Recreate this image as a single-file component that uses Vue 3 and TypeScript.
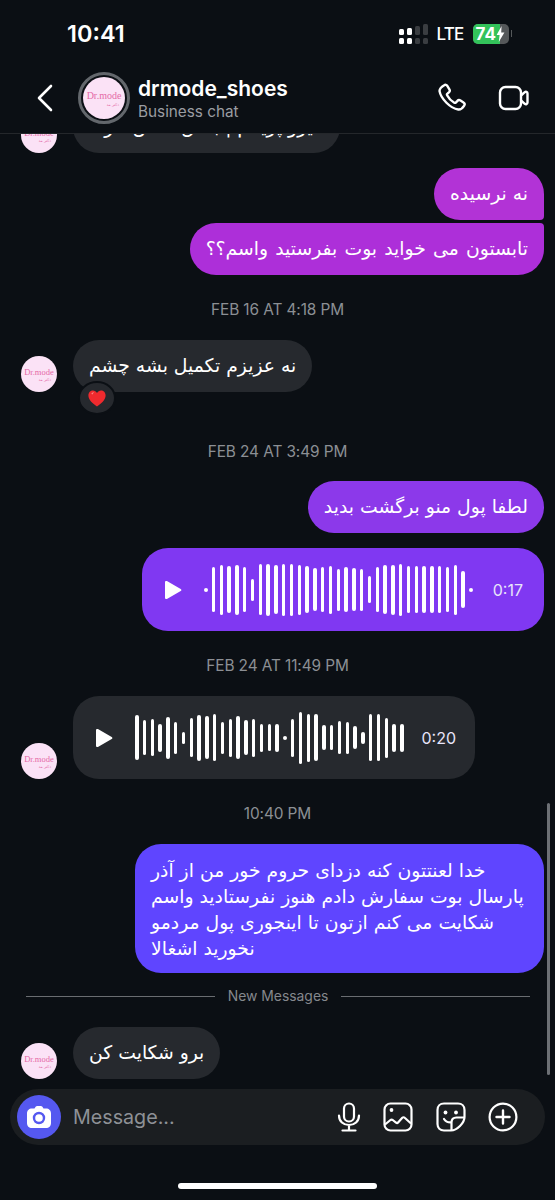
<script setup lang="ts">
const outBars = [45, 50, 47, 50, 45, 22, 51, 52, 49, 52, 52, 50, 47, 43, 45, 48, 42, 45, 43, 42, 27, 45, 49, 50, 52, 47, 47, 47, 47, 47, 45, 50, 37]
const inBars = [45, 35, 37, 28, 42, 32, 12, 39, 46, 43, 47, 32, 38, 43, 35, 38, 28, 27, 28, 4, 38, 52, 48, 47, 25, 25, 33, 32, 23, 12, 47, 47, 40, 28, 28]
</script>

<template>
  <div class="screen">
    <header class="top">
      <div class="status">
        <span class="clock">10:41</span>
        <div class="status-right">
          <svg class="signal" width="29" height="20" viewBox="0 0 29 20">
            <rect x="0" y="5" width="5" height="6" rx="1.500" fill="#fff" />
            <rect x="0" y="14" width="5" height="6" rx="1.500" fill="#fff" />
            <rect x="8" y="4" width="5" height="7" rx="1.500" fill="#fff" />
            <rect x="8" y="14" width="5" height="6" rx="1.500" fill="#fff" />
            <rect x="16" y="2" width="5" height="9" rx="1.500" fill="#3a3d41" />
            <rect x="16" y="14" width="5" height="6" rx="1.500" fill="#3a3d41" />
            <rect x="24" y="0" width="5" height="11" rx="1.500" fill="#3a3d41" />
            <rect x="24" y="14" width="5" height="6" rx="1.500" fill="#3a3d41" />
          </svg>
          <span class="lte">LTE</span>
          <div class="battery">
            <div class="battery-fill"></div>
            <span class="battery-num">74</span>
            <svg class="bolt" width="9" height="16" viewBox="0 0 9 16">
              <path d="M5.600 0 0.600 9h3L2.800 16l5.600-9.600H5.200z" fill="#fff" />
            </svg>
          </div>
          <span class="battery-tip"></span>
        </div>
      </div>
      <nav class="nav">
        <svg class="back" width="18" height="28" viewBox="0 0 18 28">
          <path d="M15 2 3 14l12 12" fill="none" stroke="#fff" stroke-width="2.600" stroke-linecap="round" stroke-linejoin="round" />
        </svg>
        <div class="avatar-ring">
          <div class="avatar big">
            <span class="dr">Dr.mode</span>
            <span class="dr-sub">دکتر مد</span>
          </div>
        </div>
        <div class="who">
          <span class="name">drmode_shoes</span>
          <span class="sub">Business chat</span>
        </div>
        <div class="nav-icons">
          <svg width="30" height="30" viewBox="0 0 30 30">
            <path d="M7.200 2.200c1.100-.7 2.400-.4 3.100.7l2.100 3.500c.6 1 .4 2.200-.5 3l-1.500 1.300c-.5.4-.6 1-.3 1.600 1.600 3.200 4 5.600 7.200 7.400.6.300 1.200.2 1.700-.3l1.400-1.500c.8-.9 2.100-1 3.100-.4l3 1.900c1.100.7 1.400 2.100.7 3.200-1.300 2.100-3.500 4.200-6 3.900C13.500 25.500 3.800 15.500 2.600 8.400 2.200 5.700 5 3.500 7.200 2.200z" fill="none" stroke="#fff" stroke-width="2.400" stroke-linejoin="round" />
          </svg>
          <svg width="32" height="28" viewBox="0 0 32 28">
            <rect x="2" y="3" width="21" height="22" rx="5.500" fill="none" stroke="#fff" stroke-width="2.400" />
            <path d="M23 11.500l3.800-3.300c1-.8 2.700-.2 2.700 1.200v9.200c0 1.400-1.700 2-2.700 1.200L23 16.500" fill="none" stroke="#fff" stroke-width="2.400" stroke-linejoin="round" />
          </svg>
        </div>
      </nav>
    </header>

    <main class="messages" dir="ltr">
      <div class="row in cut">
        <div class="avatar small"><span class="dr">Dr.mode</span><span class="dr-sub">دکتر مد</span></div>
        <div class="bubble grey cut-bubble" dir="rtl">ایرو پرینتم | بدش کفش داره</div>
      </div>

      <div class="row out first-out">
        <div class="bubble c1 tail-bottom" dir="rtl">نه نرسیده</div>
      </div>
      <div class="row out second-out">
        <div class="bubble c2 tail-top" dir="rtl">تابستون می خواید بوت بفرستید واسم؟؟</div>
      </div>

      <div class="stamp s1">FEB 16 AT 4:18 PM</div>

      <div class="row in r-heart">
        <div class="avatar small"><span class="dr">Dr.mode</span><span class="dr-sub">دکتر مد</span></div>
        <div class="bubble grey with-reaction" dir="rtl">
          نه عزیزم تکمیل بشه چشم
          <span class="reaction">
            <svg width="18" height="17" viewBox="0 0 18 17">
              <path d="M9 16.500C4.500 13 .4 9.800.4 5.400.4 2.500 2.500.5 5 .5c1.700 0 3.100.9 4 2.400C9.900 1.400 11.300.5 13 .5c2.500 0 4.600 2 4.600 4.900 0 4.400-4.100 7.600-8.600 11.100z" fill="#f02a2e" />
              <path d="M3.500 3.200c.8-.9 2-.9 2.600-.4-.9.300-1.700 1-2 2z" fill="#ff9a94" />
            </svg>
          </span>
        </div>
      </div>

      <div class="stamp s2">FEB 24 AT 3:49 PM</div>

      <div class="row out">
        <div class="bubble c3 tail-none" dir="rtl">لطفا پول منو برگشت بدید</div>
      </div>

      <div class="row out voice-out">
        <div class="voice c4">
          <svg class="play" width="20" height="22" viewBox="0 0 20 22">
            <path d="M2 3.200c0-1 1-1.600 1.900-1.100l13.800 7.800c.9.500.9 1.700 0 2.200L3.900 19.900c-.9.500-1.900-.100-1.900-1.100z" fill="#fff" />
          </svg>
          <div class="wave out-wave">
            <span class="bar dot"></span>
            <span v-for="(h, i) in outBars" :key="i" class="bar" :style="{ height: h + 'px' }"></span>
            <span class="bar dot"></span>
          </div>
          <span class="dur out-dur">0:17</span>
        </div>
      </div>

      <div class="stamp s3">FEB 24 AT 11:49 PM</div>

      <div class="row in">
        <div class="avatar small"><span class="dr">Dr.mode</span><span class="dr-sub">دکتر مد</span></div>
        <div class="voice grey in-voice">
          <svg class="play" width="20" height="22" viewBox="0 0 20 22">
            <path d="M2 3.200c0-1 1-1.600 1.900-1.100l13.800 7.800c.9.500.9 1.700 0 2.200L3.900 19.900c-.9.500-1.900-.100-1.900-1.100z" fill="#fff" />
          </svg>
          <div class="wave in-wave">
            <span v-for="(h, i) in inBars" :key="i" class="bar" :style="{ height: h + 'px' }"></span>
          </div>
          <span class="dur">0:20</span>
        </div>
      </div>

      <div class="stamp s4">10:40 PM</div>

      <div class="row out">
        <div class="bubble c5 long" dir="rtl">خدا لعنتتون کنه دزدای حروم خور من از آذر پارسال بوت سفارش دادم هنوز نفرستادید واسم شکایت می کنم ازتون تا اینجوری پول مردمو نخورید اشغالا</div>
      </div>

      <div class="divider">
        <span class="rule"></span>
        <span class="divider-text">New Messages</span>
        <span class="rule"></span>
      </div>

      <div class="row in">
        <div class="avatar small"><span class="dr">Dr.mode</span><span class="dr-sub">دکتر مد</span></div>
        <div class="bubble grey" dir="rtl">برو شکایت کن</div>
      </div>

      <span class="scrollbar"></span>
    </main>

    <div class="composer">
      <div class="camera">
        <svg width="26" height="24" viewBox="0 0 26 24">
          <path d="M8.500 3.500 9.600 1.800C10 1.200 10.600 1 11.200 1h3.600c.6 0 1.200.2 1.600.8l1.100 1.700H20c3 0 5 2 5 5v9.500c0 3-2 5-5 5H6c-3 0-5-2-5-5V8.500c0-3 2-5 5-5z" fill="#fff" />
          <circle cx="13" cy="13" r="5" fill="none" stroke="#5558f0" stroke-width="2.400" />
        </svg>
      </div>
      <span class="placeholder">Message...</span>
      <div class="composer-icons">
        <svg width="24" height="30" viewBox="0 0 24 30">
          <rect x="7" y="1.500" width="10" height="18" rx="5" fill="none" stroke="#fff" stroke-width="2.200" />
          <path d="M2 13.500c0 6 4.500 9.500 10 9.500s10-3.500 10-9.500M12 23v5M5.500 28.500h13" fill="none" stroke="#fff" stroke-width="2.200" stroke-linecap="round" />
        </svg>
        <svg width="30" height="30" viewBox="0 0 30 30">
          <rect x="1.500" y="1.500" width="27" height="27" rx="6" fill="none" stroke="#fff" stroke-width="2.200" />
          <circle cx="8.500" cy="8" r="1.900" fill="#fff" />
          <path d="M2 22.500l5.500-4.500c.7-.5 1.500-.5 2.200 0l3.300 2.600c.7.500 1.500.5 2.100-.1l4.200-4.700c.7-.7 1.700-.7 2.400 0L28 21.500" fill="none" stroke="#fff" stroke-width="2.200" stroke-linejoin="round" />
        </svg>
        <svg width="30" height="30" viewBox="0 0 30 30">
          <path d="M28.500 15V8c0-3.800-2.700-6.500-6.500-6.500H8C4.200 1.500 1.500 4.200 1.500 8v14c0 3.800 2.700 6.500 6.500 6.500h7C21 28.500 28.500 21 28.500 15z" fill="none" stroke="#fff" stroke-width="2.200" stroke-linejoin="round" />
          <path d="M28 15.500h-7.500c-3 0-5 2-5 5V28" fill="none" stroke="#fff" stroke-width="2.200" stroke-linejoin="round" />
          <circle cx="9.500" cy="10.500" r="1.900" fill="#fff" />
          <circle cx="20" cy="10.500" r="1.900" fill="#fff" />
          <path d="M8 17c1.500 2.400 3.500 3.400 6.500 3.400" fill="none" stroke="#fff" stroke-width="2.200" stroke-linecap="round" />
        </svg>
        <svg width="30" height="30" viewBox="0 0 30 30">
          <circle cx="15" cy="15" r="13.400" fill="none" stroke="#fff" stroke-width="2.200" />
          <path d="M15 8.500v13M8.500 15h13" fill="none" stroke="#fff" stroke-width="2.400" stroke-linecap="round" />
        </svg>
      </div>
    </div>

    <div class="home-area"><span class="home"></span></div>
  </div>
</template>

<style>
body {
  background: #0b0f14;
}
</style>

<style scoped>
.screen {
  width: 555px;
  height: 1200px;
  background: #0b0f14;
  color: #fff;
  display: flex;
  flex-direction: column;
  overflow: hidden;
  font-family: Inter, "Liberation Sans", "DejaVu Sans", sans-serif;
}

.top {
  flex: none;
  height: 134px;
  box-sizing: border-box;
  border-bottom: 1px solid #24272b;
  background: #0b0f14;
}

.status {
  height: 67px;
  display: flex;
  justify-content: space-between;
  align-items: center;
  padding: 0 43px 0 67px;
}

.clock {
  font-size: 23.500px;
  font-weight: 600;
}

.status-right {
  display: flex;
  align-items: center;
}

.signal {
  margin-right: 9px;
}

.lte {
  font-size: 17px;
  font-weight: 500;
  letter-spacing: -0.8px;
  margin-right: 9px;
}

.battery {
  position: relative;
  width: 36px;
  height: 20px;
  border-radius: 5px;
  background: #55585a;
  overflow: hidden;
}

.battery-fill {
  width: 27px;
  height: 100%;
  background: #33c25a;
}

.battery-num {
  position: absolute;
  left: 3px;
  top: 0;
  font-size: 17px;
  line-height: 20px;
  font-weight: 700;
}

.bolt {
  position: absolute;
  right: 4px;
  top: 2px;
}

.battery-tip {
  width: 1.500px;
  height: 7px;
  margin-left: 2px;
  background: #55585a;
}

.nav {
  height: 62px;
  display: flex;
  align-items: center;
  padding: 0 25px 0 36px;
}

.back {
  margin-right: 24px;
}

.avatar-ring {
  width: 52px;
  height: 52px;
  box-sizing: border-box;
  border: 3px solid #63676c;
  border-radius: 50%;
  display: flex;
  align-items: center;
  justify-content: center;
}

.avatar {
  flex: none;
  border-radius: 50%;
  background: #fbe2f6;
  display: flex;
  flex-direction: column;
  align-items: center;
  justify-content: center;
  overflow: hidden;
  color: #e56aa6;
}

.avatar.big {
  width: 42px;
  height: 42px;
}

.avatar.small {
  width: 36px;
  height: 36px;
  margin-right: 16px;
}

.dr {
  font-family: "Liberation Serif", serif;
  font-size: 8.500px;
  line-height: 10px;
  white-space: nowrap;
}

.big .dr {
  font-size: 10px;
  line-height: 12px;
}

.dr-sub {
  font-family: "DejaVu Sans", sans-serif;
  font-size: 4px;
  line-height: 5px;
  align-self: flex-end;
  margin-right: 6px;
}

.who {
  display: flex;
  flex-direction: column;
  margin-left: 8px;
}

.name {
  font-size: 21px;
  line-height: 26px;
  font-weight: 600;
}

.sub {
  font-size: 15.300px;
  line-height: 19px;
  color: #9a9da2;
}

.nav-icons {
  margin-left: auto;
  display: flex;
  align-items: center;
  gap: 31px;
}

.messages {
  position: relative;
  flex: none;
  height: 955px;
  overflow: hidden;
  box-sizing: border-box;
  padding: 0 11px 0 21px;
  display: flex;
  flex-direction: column;
}

.row {
  display: flex;
  align-items: flex-end;
  flex: none;
}

.row.out {
  justify-content: flex-end;
}

.cut {
  margin-top: -33px;
  margin-bottom: 15px;
}

.first-out {
  margin-bottom: 3px;
}

.bubble {
  box-sizing: border-box;
  min-height: 52px;
  padding: 0 16px;
  border-radius: 26px;
  font-family: "DejaVu Sans", sans-serif;
  font-size: 18.800px;
  line-height: 52px;
  white-space: nowrap;
}

.cut-bubble {
  width: 267px;
  padding-right: 22px;
}

.grey {
  background: #26292e;
}

.c1 {
  background: #b233d6;
}

.c2 {
  background: #ad2fd9;
  word-spacing: 1.200px;
}

.c3 {
  background: #8c39ea;
  margin-bottom: 15px;
}

.c4 {
  background: #8038f2;
}

.c5 {
  background: #5f45ff;
}

.tail-bottom {
  border-bottom-right-radius: 4px;
}

.tail-top {
  border-top-right-radius: 4px;
}

.long {
  width: 409px;
  height: 129px;
  padding: 14px 16px 10px;
  line-height: 26px;
  white-space: normal;
  text-align: left;
  border-radius: 26px;
}

.with-reaction {
  position: relative;
}

.reaction {
  position: absolute;
  left: 5px;
  top: 41px;
  width: 38px;
  height: 34px;
  box-sizing: border-box;
  border-radius: 50%;
  background: #26292e;
  border: 2px solid #0b0f14;
  display: flex;
  align-items: center;
  justify-content: center;
}

.stamp {
  flex: none;
  text-align: center;
  font-size: 15.400px;
  line-height: 18px;
  letter-spacing: -0.1px;
  color: #8c8f94;
  margin-left: -10px;
}

.s1 {
  margin-top: 26px;
  margin-bottom: 21px;
}

.s2 {
  margin-top: 51px;
  margin-bottom: 20px;
}

.s3 {
  margin-top: 26px;
  margin-bottom: 21px;
}

.s4 {
  margin-top: 26px;
  margin-bottom: 21px;
}

.voice {
  box-sizing: border-box;
  width: 402px;
  height: 83px;
  border-radius: 26px;
  display: flex;
  align-items: center;
  position: relative;
}

.play {
  flex: none;
  margin-left: 21px;
}

.wave {
  display: flex;
  align-items: center;
  gap: 4.300px;
}

.out-wave {
  margin-left: 21px;
}

.in-wave {
  margin-left: 21px;
}

.bar {
  flex: none;
  width: 3.500px;
  border-radius: 2px;
  background: #fff;
}

.bar.dot {
  height: 4px;
}

.dur {
  position: absolute;
  right: 19px;
  font-size: 16px;
  color: #e8e4fa;
}

.out-dur {
  right: 21px;
}

.divider {
  flex: none;
  display: flex;
  align-items: center;
  gap: 13px;
  height: 18px;
  margin: 14px 14px 22px -16px;
  padding-left: 21px;
  font-size: 13.900px;
  color: #85888d;
}

.rule {
  flex: 1;
  height: 1px;
  background: #6a6d71;
}

.divider-text {
  flex: none;
}

.scrollbar {
  position: absolute;
  left: 547px;
  top: 669px;
  width: 3px;
  height: 272px;
  border-radius: 2px;
  background: #6d7075;
}

.composer {
  flex: none;
  margin: 0 10px;
  height: 56px;
  border-radius: 28px;
  background: #1b1e21;
  display: flex;
  align-items: center;
  padding: 0 27px 0 7px;
}

.camera {
  width: 44px;
  height: 44px;
  border-radius: 50%;
  background: #5558f0;
  display: flex;
  align-items: center;
  justify-content: center;
}

.placeholder {
  margin-left: 12px;
  font-size: 19.700px;
  color: #8e9196;
}

.composer-icons {
  margin-left: auto;
  display: flex;
  align-items: center;
  gap: 22.500px;
}

.home-area {
  flex: 1;
  display: flex;
  justify-content: center;
  padding-top: 38px;
}

.home {
  width: 199px;
  height: 6px;
  border-radius: 3px;
  background: #fff;
}
</style>
